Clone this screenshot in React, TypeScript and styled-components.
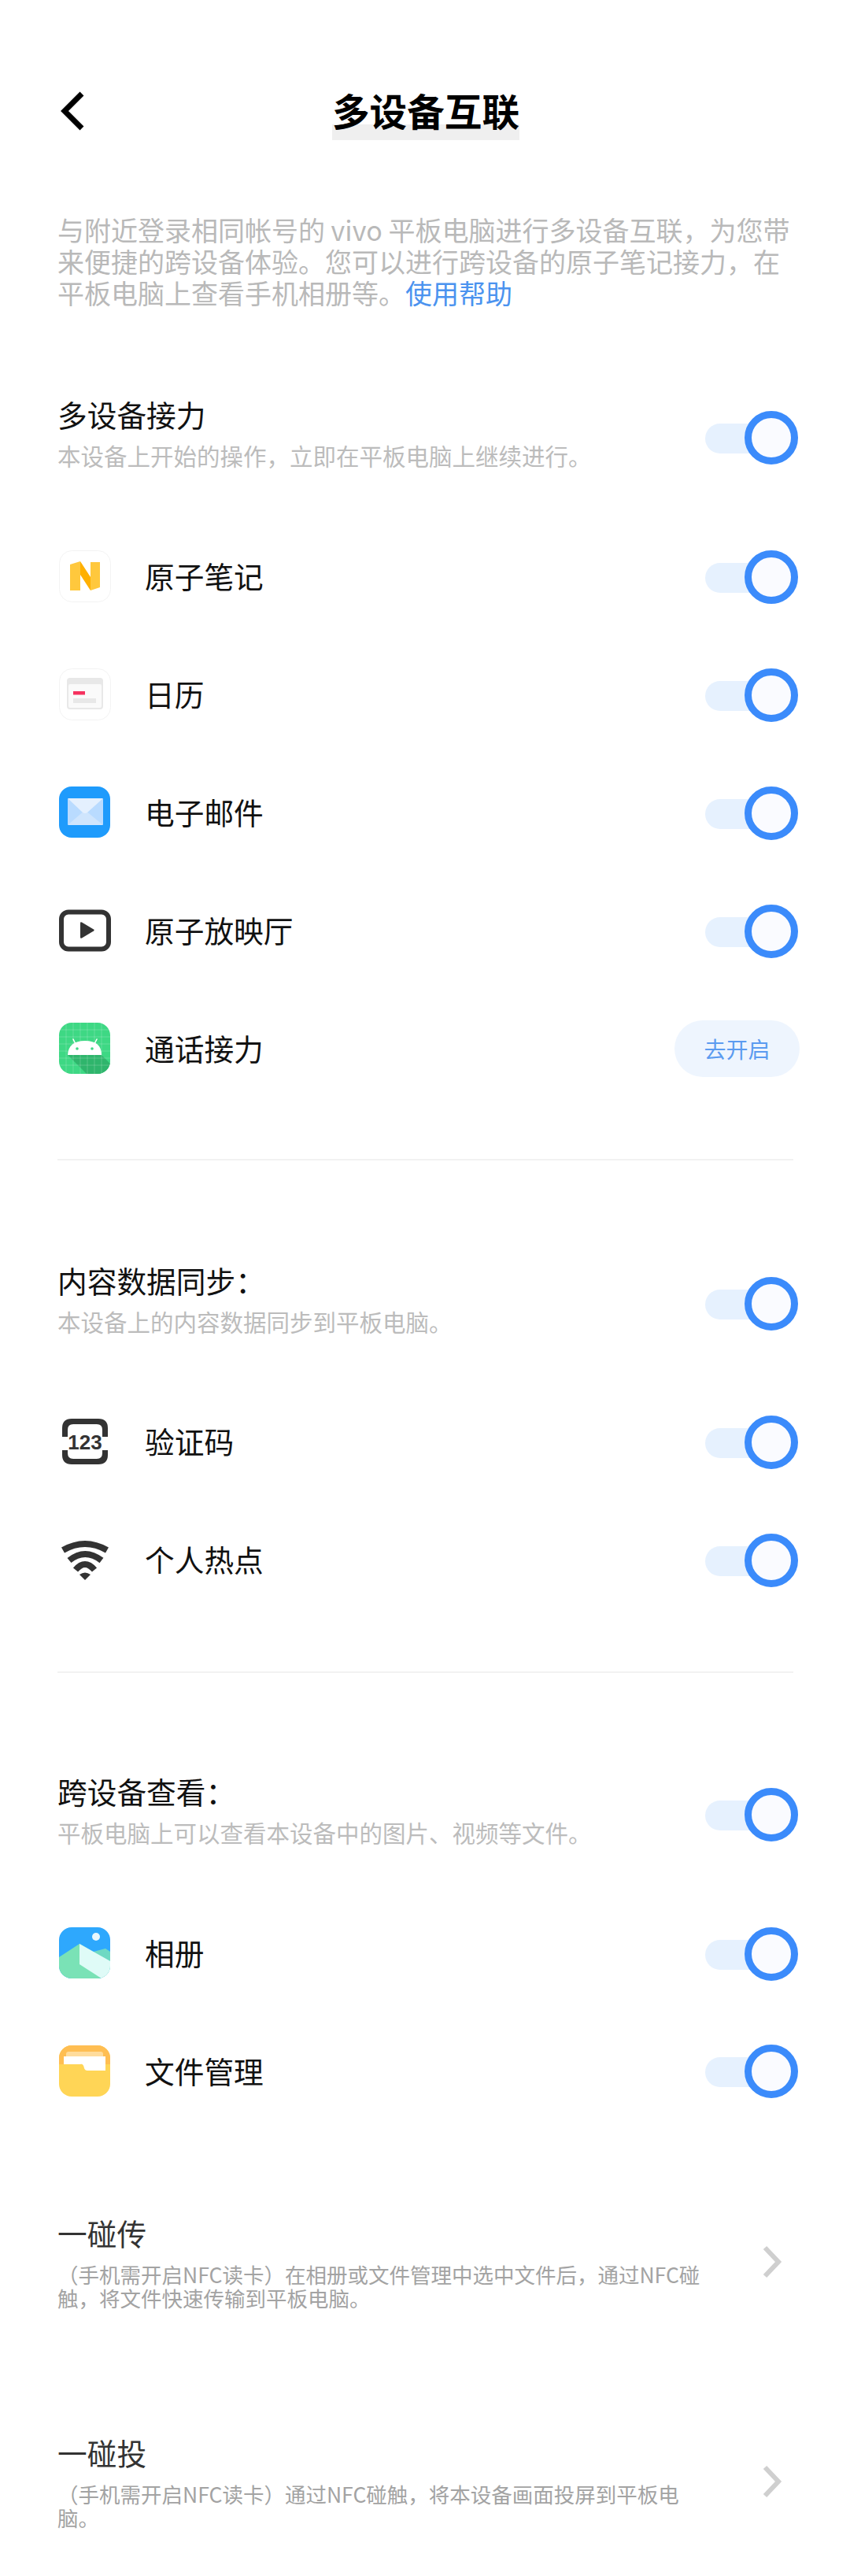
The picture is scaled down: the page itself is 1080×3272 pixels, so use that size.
import React from 'react';
import styled, { createGlobalStyle } from 'styled-components';

const GlobalStyle = createGlobalStyle`
  html, body {
    margin: 0;
    padding: 0;
    background: #fff;
  }
  body {
    font-family: "Noto Sans CJK SC", "Liberation Sans", sans-serif;
  }
`;

const Page = styled.div`
  width: 1080px;
  height: 3272px;
  box-sizing: border-box;
  padding: 116px 66px 0 73px;
  overflow: hidden;
`;

const NavBar = styled.header`
  position: relative;
  height: 62px;
  margin-right: 5px;
  display: flex;
  justify-content: center;
`;

const BackIcon = styled.svg`
  position: absolute;
  left: 2px;
  top: 0;
`;

const Title = styled.h1`
  margin: 0;
  height: 62px;
  font-size: 47.6px;
  line-height: 48px;
  font-weight: 700;
  color: #000;
  background: linear-gradient(#fff 42px, #efefef 42px);
`;

const Intro = styled.p`
  margin: 94px 0 0;
  width: 941px;
  font-size: 34px;
  line-height: 40px;
  color: #b9b9b9;
`;

const HelpLink = styled.span`
  color: #4b93ef;
`;

const Track = styled.div`
  position: relative;
  flex: none;
  width: 118px;
  height: 70px;
  margin-top: 3px;
  &::before {
    content: '';
    position: absolute;
    left: 0;
    top: 16px;
    width: 90px;
    height: 38px;
    border-radius: 19px;
    background: #e6f1fe;
  }
`;

const Knob = styled.div`
  position: absolute;
  right: 0;
  top: 0;
  width: 68px;
  height: 68px;
  box-sizing: border-box;
  border: 9px solid #3b8bfb;
  border-radius: 50%;
  background: #fafbff;
`;

const SectionHead = styled.div<{ $top: number; $bottom: number }>`
  display: flex;
  align-items: center;
  justify-content: space-between;
  height: 100px;
  margin-top: ${(p) => p.$top}px;
  margin-bottom: ${(p) => p.$bottom}px;
  ${Track} {
    margin-top: 7px;
  }
`;

const HeadTitle = styled.div`
  margin: -2px 0 2px;
  font-size: 37.7px;
  line-height: 50px;
  color: #111;
`;

const HeadSub = styled.div`
  font-size: 29.5px;
  line-height: 50px;
  color: #bcbcbc;
`;

const Row = styled.div<{ $height?: number }>`
  display: flex;
  align-items: center;
  height: ${(p) => p.$height ?? 150}px;
`;

const IconBox = styled.div`
  width: 66px;
  height: 66px;
  margin-left: 2px;
  flex: none;
  display: flex;
`;

const Label = styled.div`
  flex: 1;
  margin-left: 43px;
  padding-bottom: 2px;
  font-size: 37.7px;
  line-height: 50px;
  color: #111;
`;

const OpenButton = styled.button`
  flex: none;
  width: 159px;
  height: 72px;
  margin-right: -2px;
  padding: 0;
  border: 0;
  border-radius: 36px;
  background: #eef5fe;
  color: #5b9bf0;
  font-family: inherit;
  font-size: 28px;
`;

const Divider = styled.hr<{ $top: number; $bottom: number }>`
  height: 2px;
  width: 935px;
  margin: ${(p) => p.$top}px 0 ${(p) => p.$bottom}px;
  border: 0;
  background: #f2f2f2;
`;

const LinkRow = styled.div<{ $top: number }>`
  display: flex;
  align-items: center;
  justify-content: space-between;
  margin-top: ${(p) => p.$top}px;
`;

const LinkTitle = styled.div`
  font-size: 37.7px;
  line-height: 50px;
  color: #333;
`;

const LinkDesc = styled.div`
  width: 825px;
  margin-top: 13px;
  font-size: 26.5px;
  line-height: 30px;
  color: #a3a3a3;
`;

const Chevron = styled.svg`
  flex: none;
  margin-right: 20px;
`;

function Switch() {
  return (
    <Track>
      <Knob />
    </Track>
  );
}

const NotesIcon = () => (
  <svg width="66" height="66" viewBox="0 0 66 66">
    <rect x="0.5" y="0.5" width="65" height="65" rx="16" fill="#fff" stroke="#f3f3f3" />
    <path d="M14 18l13-4v37H14z" fill="#ffc83d" />
    <path d="M40 15h12v32l-12 4z" fill="#ffc83d" />
    <path d="M27 14l13 20v17L27 31z" fill="#ffb000" />
  </svg>
);

const CalendarIcon = () => (
  <svg width="66" height="66" viewBox="0 0 66 66">
    <rect x="0.5" y="0.5" width="65" height="65" rx="16" fill="#fff" stroke="#f3f3f3" />
    <rect x="10" y="12" width="46" height="40" rx="4" fill="#e8e8e8" />
    <rect x="12" y="20" width="42" height="30" rx="2" fill="#fafafa" />
    <rect x="18" y="29" width="15" height="4.5" fill="#f5325f" />
    <rect x="18" y="38" width="29" height="6" fill="#e8e8e8" />
  </svg>
);

const MailIcon = () => (
  <svg width="66" height="66" viewBox="0 0 66 66">
    <rect width="65" height="65" rx="16" fill="#1e9bfc" />
    <rect x="11" y="15" width="45" height="34" rx="1.5" fill="#b9dbff" />
    <path d="M11 49l22-19 23 19z" fill="#cfe5fd" />
    <path d="M11 15h45L36 33q-3 2-6 0z" fill="#e4f0fe" />
  </svg>
);

const PlayerIcon = () => (
  <svg width="66" height="66" viewBox="0 0 66 66">
    <rect x="3" y="9.5" width="60" height="47" rx="9" fill="#fff" stroke="#333" strokeWidth="6" />
    <path d="M27 23.500q0-2 2-1l15 9q1.500 1 0 2l-15 9q-2 1-2-1z" fill="#333" />
  </svg>
);

const AndroidIcon = () => (
  <svg width="66" height="66" viewBox="0 0 66 66">
    <defs>
      <clipPath id="android-clip">
        <rect width="65" height="65" rx="16" />
      </clipPath>
    </defs>
    <g clipPath="url(#android-clip)">
      <rect width="65" height="65" fill="#3ed884" />
      <path d="M11 41h43l11 11v13H35z" fill="#2fb56c" />
      <path
        d="M9 0v65M18 0v65M27 0v65M36 0v65M45 0v65M54 0v65M0 9h65M0 18h65M0 27h65M0 36h65M0 45h65M0 54h65"
        stroke="#fff"
        strokeOpacity="0.2"
        strokeWidth="1"
      />
      <path d="M11 41q1-18 22-18t21 18z" fill="#fff" />
      <path d="M21 27l-3-6M45 27l3-6" stroke="#fff" strokeWidth="1.600" strokeLinecap="round" />
      <circle cx="23" cy="33" r="1.800" fill="#3ed884" />
      <circle cx="42" cy="33" r="1.800" fill="#3ed884" />
    </g>
  </svg>
);

const CodeIcon = () => (
  <svg width="66" height="66" viewBox="0 0 66 66">
    <path d="M4 27V16Q4 4 16 4H50Q62 4 62 16V27H55V18Q55 11 48 11H18Q11 11 11 18V27Z" fill="#333" />
    <path d="M4 44V50Q4 62 16 62H50Q62 62 62 50V44H55V48Q55 55 48 55H18Q11 55 11 48V44Z" fill="#333" />
    <text
      x="33"
      y="43"
      textAnchor="middle"
      fontFamily='"Liberation Sans", sans-serif'
      fontWeight="700"
      fontSize="26"
      fill="#333"
    >
      123
    </text>
  </svg>
);

const WifiIcon = () => (
  <svg width="66" height="66" viewBox="0 0 66 66">
    <path d="M5 21Q33 5 61 21M13 34Q33 18 54 34M21 46Q33 32 45 46" fill="none" stroke="#333" strokeWidth="8" />
    <path d="M26 52Q33 47 40 52L33 59Z" fill="#333" />
  </svg>
);

const GalleryIcon = () => (
  <svg width="66" height="66" viewBox="0 0 66 66">
    <defs>
      <clipPath id="gallery-clip">
        <rect width="65" height="65" rx="16" />
      </clipPath>
    </defs>
    <g clipPath="url(#gallery-clip)">
      <rect width="65" height="65" fill="#2ea8fd" />
      <circle cx="47" cy="12" r="5" fill="#e8f7fd" />
      <path d="M40 32l19-5 6 4v20H40z" fill="#6fd9c3" />
      <path d="M0 38l26-17 40 23v21H0z" fill="#7ae2b6" />
      <path d="M26 21l39 22v13q-3 8-9 9h-2L26 47z" fill="#dffbf7" />
    </g>
  </svg>
);

const FilesIcon = () => (
  <svg width="66" height="66" viewBox="0 0 66 66">
    <defs>
      <clipPath id="files-clip">
        <rect width="65" height="65" rx="16" />
      </clipPath>
    </defs>
    <g clipPath="url(#files-clip)">
      <rect width="65" height="65" fill="#ffd556" />
      <rect width="65" height="24" fill="#ffbe52" />
      <rect x="9" y="8" width="47" height="10" rx="3" fill="#ffdc9c" />
      <path d="M6 14h53v18H36q-3 0-4-3-1-6-5-5H6z" fill="#fff" />
    </g>
  </svg>
);

const ChevronRight = () => (
  <Chevron width="26" height="42" viewBox="0 0 26 42">
    <path d="M4 3l17 18L4 39" fill="none" stroke="#cfcfcf" strokeWidth="6" />
  </Chevron>
);

export default function App() {
  return (
    <Page>
      <GlobalStyle />
      <NavBar>
        <BackIcon width="34" height="50" viewBox="0 0 34 50">
          <path d="M29 3L7 25l22 22" fill="none" stroke="#000" strokeWidth="7" />
        </BackIcon>
        <Title>多设备互联</Title>
      </NavBar>
      <Intro>
        与附近登录相同帐号的 vivo 平板电脑进行多设备互联，为您带来便捷的跨设备体验。您可以进行跨设备的原子笔记接力，在平板电脑上查看手机相册等。
        <HelpLink>使用帮助</HelpLink>
      </Intro>

      <SectionHead $top={111} $bottom={54}>
        <div>
          <HeadTitle>多设备接力</HeadTitle>
          <HeadSub>本设备上开始的操作，立即在平板电脑上继续进行。</HeadSub>
        </div>
        <Switch />
      </SectionHead>
      <Row>
        <IconBox><NotesIcon /></IconBox>
        <Label>原子笔记</Label>
        <Switch />
      </Row>
      <Row>
        <IconBox><CalendarIcon /></IconBox>
        <Label>日历</Label>
        <Switch />
      </Row>
      <Row>
        <IconBox><MailIcon /></IconBox>
        <Label>电子邮件</Label>
        <Switch />
      </Row>
      <Row>
        <IconBox><PlayerIcon /></IconBox>
        <Label>原子放映厅</Label>
        <Switch />
      </Row>
      <Row>
        <IconBox><AndroidIcon /></IconBox>
        <Label>通话接力</Label>
        <OpenButton type="button">去开启</OpenButton>
      </Row>
      <Divider $top={65} $bottom={129} />

      <SectionHead $top={0} $bottom={53}>
        <div>
          <HeadTitle>内容数据同步：</HeadTitle>
          <HeadSub>本设备上的内容数据同步到平板电脑。</HeadSub>
        </div>
        <Switch />
      </SectionHead>
      <Row>
        <IconBox><CodeIcon /></IconBox>
        <Label>验证码</Label>
        <Switch />
      </Row>
      <Row>
        <IconBox><WifiIcon /></IconBox>
        <Label>个人热点</Label>
        <Switch />
      </Row>
      <Divider $top={67} $bottom={127} />

      <SectionHead $top={0} $bottom={54}>
        <div>
          <HeadTitle>跨设备查看：</HeadTitle>
          <HeadSub>平板电脑上可以查看本设备中的图片、视频等文件。</HeadSub>
        </div>
        <Switch />
      </SectionHead>
      <Row>
        <IconBox><GalleryIcon /></IconBox>
        <Label>相册</Label>
        <Switch />
      </Row>
      <Row $height={149}>
        <IconBox><FilesIcon /></IconBox>
        <Label>文件管理</Label>
        <Switch />
      </Row>

      <LinkRow $top={106}>
        <div>
          <LinkTitle>一碰传</LinkTitle>
          <LinkDesc>（手机需开启NFC读卡）在相册或文件管理中选中文件后，通过NFC碰触，将文件快速传输到平板电脑。</LinkDesc>
        </div>
        <ChevronRight />
      </LinkRow>
      <LinkRow $top={156}>
        <div>
          <LinkTitle>一碰投</LinkTitle>
          <LinkDesc>（手机需开启NFC读卡）通过NFC碰触，将本设备画面投屏到平板电脑。</LinkDesc>
        </div>
        <ChevronRight />
      </LinkRow>
    </Page>
  );
}
